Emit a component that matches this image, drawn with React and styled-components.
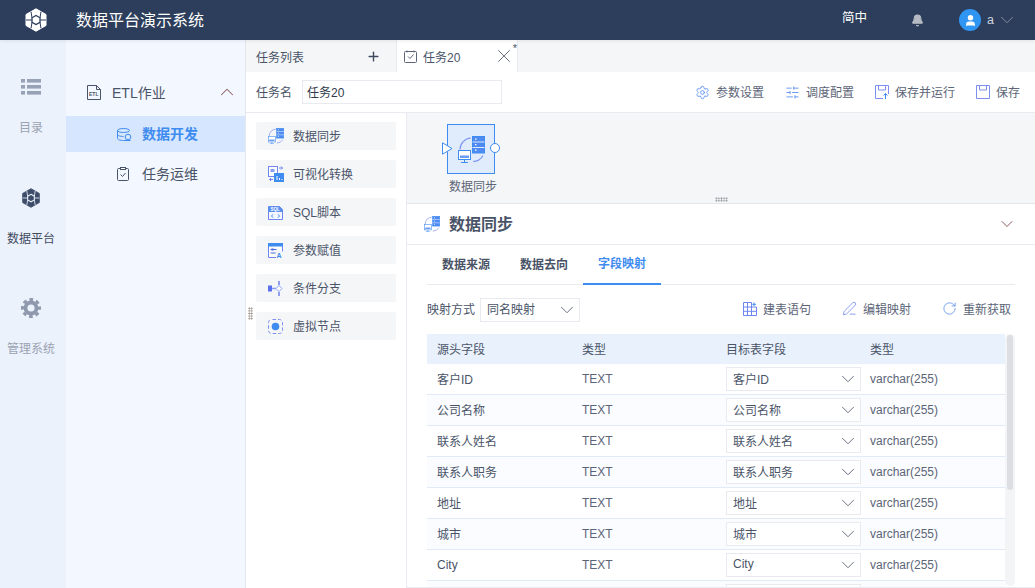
import React from 'react'
import styled, { createGlobalStyle } from 'styled-components'
import { ChevronDown, ChevronUp, Plus, X, Settings, SlidersHorizontal, Bell, User, RotateCw, PenLine } from 'lucide-react'

const GlobalStyle = createGlobalStyle`
  html, body { margin: 0; padding: 0; height: 100%; overflow: hidden; background: #fff; }
  body { font-family: "Liberation Sans", "Noto Sans CJK SC", sans-serif; font-size: 12px; color: #4a5468; }
  * { box-sizing: border-box; }
`

const Page = styled.div`
  width: 1035px;
  height: 588px;
  display: flex;
  flex-direction: column;
  overflow: hidden;
`

const Header = styled.header`
  height: 40px;
  flex: none;
  background: #2c3e5b;
  color: #fff;
  display: flex;
  align-items: center;
  position: relative;
  z-index: 2;
  box-shadow: 0 1px 4px rgba(0, 0, 0, .08);
`
const LogoCell = styled.div`
  width: 72px;
  display: flex;
  justify-content: center;
`
const Title = styled.div`
  font-size: 16px;
  margin: -2px 0 0 4px;
  flex: 1;
`
const Lang = styled.div`
  font-size: 12.5px;
  margin-right: 44px;
  margin-top: -8px;
`
const Avatar = styled.div`
  width: 22px;
  height: 22px;
  border-radius: 50%;
  background: #2f95f3;
  display: flex;
  align-items: center;
  justify-content: center;
  margin-left: 35px;
`
const UserName = styled.div`
  font-size: 12.5px;
  color: #cfd5de;
  margin: 0 2px 0 6px;
`
const UserBox = styled.div`
  display: flex;
  align-items: center;
  margin-right: 17px;
`

const Body = styled.div`
  flex: 1;
  min-height: 0;
  display: flex;
`

const Rail = styled.nav`
  width: 66px;
  flex: none;
  background: #ecf2fc;
  display: flex;
  flex-direction: column;
  align-items: center;
  padding: 36px 4px 0 0;
  gap: 39.5px;
`
const RailItem = styled.div`
  width: 62px;
  height: 71px;
  display: flex;
  flex-direction: column;
  align-items: center;
  gap: 23px;
  font-size: 12px;
  line-height: 14px;
  color: ${p => (p.$active ? '#3f4a5f' : '#9aa3b2')};
`
const RailIcon = styled.div`
  height: 22px;
  display: flex;
  align-items: center;
  justify-content: center;
`

const SideNav = styled.nav`
  width: 180px;
  flex: none;
  background: #f3f7ff;
  border-right: 1px solid #e4e7ee;
  padding-top: 30px;
`
const GroupRow = styled.div`
  height: 44px;
  margin-bottom: 2px;
  display: flex;
  align-items: center;
  padding: 0 7px 0 21px;
  gap: 11px;
  font-size: 14px;
  color: #4a5468;
`
const GroupLabel = styled.span`
  flex: 1;
  margin-top: -1px;
`
const NavItem = styled.div`
  height: 36px;
  margin-bottom: 4px;
  display: flex;
  align-items: center;
  padding-left: 51px;
  font-size: 14px;
  background: ${p => (p.$active ? '#d5e6fe' : 'transparent')};
  color: ${p => (p.$active ? '#3f8cf0' : '#4a5468')};
  font-weight: ${p => (p.$active ? 700 : 400)};
`
const NavIcon = styled.span`
  width: 25px;
  display: flex;
`
const NavLabel = styled.span`
  margin-top: -2px;
`

const Main = styled.main`
  flex: 1;
  min-width: 0;
  display: flex;
  flex-direction: column;
`
const TabBar = styled.div`
  height: 32px;
  flex: none;
  display: flex;
  background: #f5f6f8;
`
const ListTab = styled.div`
  width: 150px;
  display: flex;
  align-items: center;
  justify-content: space-between;
  padding: 0 15px 0 10px;
  font-size: 12px;
`
const OpenTab = styled.div`
  width: 122px;
  background: #fff;
  border-left: 1px solid #e8eaef;
  border-right: 1px solid #e8eaef;
  display: flex;
  align-items: center;
  padding: 0 2px 0 7px;
  gap: 6px;
  font-size: 12px;
  position: relative;
`
const TabText = styled.span`
  flex: 1;
`
const Dirty = styled.span`
  position: absolute;
  right: 0;
  top: 3px;
  font-size: 11px;
  line-height: 11px;
`

const NameRow = styled.div`
  height: 40px;
  flex: none;
  display: flex;
  align-items: center;
  padding: 0 15px 0 10px;
  background: #fff;
`
const NameLabel = styled.span`
  font-size: 12px;
  margin: -2px 10px 0 0;
`
const NameInput = styled.div`
  width: 200px;
  height: 24px;
  border: 1px solid #e8eaef;
  display: flex;
  align-items: center;
  padding: 0 0 2px 4px;
  font-size: 12px;
  color: #2f3a4d;
`
const Actions = styled.div`
  margin-left: auto;
  display: flex;
  align-items: center;
  gap: 21px;
`
const Action = styled.div`
  display: flex;
  align-items: center;
  gap: 6px;
  font-size: 12px;
  color: #5c6577;
`
const ActionText = styled.span`
  margin-top: -1px;
`

const Work = styled.div`
  flex: 1;
  min-height: 0;
  display: flex;
  border-top: 1px solid #e9ebf0;
`
const Palette = styled.aside`
  width: 161px;
  flex: none;
  padding: 9px 10px 0 10px;
  display: flex;
  flex-direction: column;
  gap: 10px;
  border-right: 1px solid #e9ebf0;
  position: relative;
`
const PaletteItem = styled.div`
  height: 28px;
  width: 140px;
  background: #f5f6f8;
  border-radius: 2px;
  display: flex;
  align-items: center;
  padding-left: 12px;
  font-size: 12px;
  color: #4a5468;
`
const PaletteIcon = styled.span`
  width: 25px;
  display: flex;
`
const PaletteLabel = styled.span`
  margin-top: -2px;
`
const DragDots = styled.div`
  position: absolute;
  left: 2px;
  top: 194px;
  width: 5px;
  height: 13px;
  background-image: radial-gradient(#8c7f7a 45%, transparent 50%);
  background-size: 2.5px 2.6px;
`

const Right = styled.div`
  flex: 1;
  min-width: 0;
  display: flex;
  flex-direction: column;
`
const Canvas = styled.div`
  height: 91px;
  flex: none;
  background: #f5f6f8;
  border-bottom: 1px solid #e4e6eb;
  padding: 11px 0 0 40px;
  position: relative;
`
const Node = styled.div`
  width: 48px;
  height: 50px;
  background: #e0ebfc;
  border: 1px solid #3f8cf0;
  display: flex;
  align-items: center;
  justify-content: center;
  position: relative;
`
const PortIn = styled.svg`
  position: absolute;
  left: -6px;
  top: 17px;
`
const PortOut = styled.span`
  position: absolute;
  right: -6px;
  top: 18px;
  width: 10px;
  height: 10px;
  border-radius: 50%;
  border: 1px solid #3f8cf0;
  background: #fff;
`
const NodeLabel = styled.div`
  width: 60px;
  margin: 6px 0 0 -4px;
  font-size: 12px;
  line-height: 14px;
  text-align: center;
  color: #5c6577;
`
const SplitDots = styled.div`
  position: absolute;
  left: 308px;
  bottom: 1px;
  width: 13px;
  height: 5px;
  background-image: radial-gradient(#8c8f96 45%, transparent 50%);
  background-size: 2.6px 2.5px;
`

const Detail = styled.section`
  flex: 1;
  min-height: 0;
  display: flex;
  flex-direction: column;
  background: #fff;
  border-bottom: 1px solid #e9ebf0;
  overflow: hidden;
`
const DetailHead = styled.div`
  height: 41px;
  flex: none;
  border-bottom: 1px solid #e9ebf0;
  display: flex;
  align-items: center;
  padding: 0 18px 0 17px;
  gap: 9px;
`
const DetailTitle = styled.h2`
  flex: 1;
  margin: -2px 0 0;
  font-size: 16px;
  font-weight: 700;
  color: #4a5468;
`
const Tabs = styled.div`
  margin: 0 20px;
  height: 40px;
  flex: none;
  border-bottom: 1px solid #e9ebf0;
  display: flex;
`
const Tab = styled.div`
  width: 78px;
  height: 40px;
  display: flex;
  align-items: center;
  justify-content: center;
  padding-bottom: 4px;
  font-size: 12px;
  font-weight: 700;
  color: ${p => (p.$active ? '#3f8cf0' : '#4a5468')};
  border-bottom: ${p => (p.$active ? '2px solid #3f8cf0' : 'none')};
`
const MapRow = styled.div`
  height: 49px;
  flex: none;
  margin: 0 24px 0 20px;
  display: flex;
  align-items: center;
`
const MapLabel = styled.span`
  font-size: 12px;
  margin: -2px 5px 0 0;
`
const Select = styled.div`
  width: ${p => p.$w}px;
  height: 24px;
  border: 1px solid #e8eaef;
  background: #fff;
  display: flex;
  align-items: center;
  justify-content: space-between;
  padding: 0 1px 0 6px;
  font-size: 12px;
  color: #4a5468;
`
const SelectText = styled.span`
  margin-top: -2px;
`
const MapActions = styled.div`
  margin: -2px 0 0 auto;
  display: flex;
  gap: 31px;
`

const TableWrap = styled.div`
  position: relative;
  margin-left: 20px;
  width: 588px;
`
const Scrollbar = styled.div`
  position: absolute;
  right: 0;
  top: 0;
  width: 10px;
  height: 252px;
  background: #f3f4f6;
  border-radius: 5px;
  &::before {
    content: '';
    display: block;
    width: 6px;
    height: 155px;
    margin: 1px 2px;
    background: #dcdee3;
    border-radius: 3px;
  }
`
const Row = styled.div`
  width: 578px;
  display: grid;
  grid-template-columns: 145px 144px 144px 1fr;
  align-items: center;
  height: ${p => (p.$head ? 30 : 31)}px;
  padding-left: 10px;
  font-size: 12px;
  background: ${p => (p.$head ? '#e9f1fc' : p.$odd ? '#fbfcff' : '#fff')};
  border-bottom: ${p => (p.$head ? 'none' : '1px solid #e1ebf8')};
  color: #4a5468;
`
const SourceCell = styled.span`
  margin-top: -1px;
`
const TypeCell = styled.span`
  color: #5c6577;
`

const Cube = ({ size = 24, color = '#fff', hole = '#2c3e5b' }) => (
  <svg width={size} height={size} viewBox="0 0 24 24">
    <path d="M12 .8l10 5.700v11L12 23.200 2 17.500v-11z" fill={color} stroke={color} strokeWidth="1" strokeLinejoin="round" />
    <path d="M7 3.700l1 6.100M17 3.700l-1 6.100M22 12h-6M17 20.300l-1-6M7 20.300l1-6M2 12h6" stroke={hole} strokeWidth="1" />
    <path d="M12 7.500l4 2.300v4.500l-4 2.300-4-2.300V9.800z" fill={color} stroke={hole} strokeWidth="1.300" />
  </svg>
)
const ListIcon = () => (
  <svg width="20" height="16" viewBox="0 0 20 16" fill="#98a2b6">
    <rect x="0" y="0" width="4" height="3.600" /><rect x="6" y="0" width="14" height="3.600" />
    <rect x="0" y="6" width="4" height="3.600" /><rect x="6" y="6" width="14" height="3.600" />
    <rect x="0" y="12" width="4" height="3.600" /><rect x="6" y="12" width="14" height="3.600" />
  </svg>
)
const GearSolid = () => (
  <svg width="20" height="20" viewBox="0 0 20 20" fill="none" stroke="#8e99ad">
    <circle cx="10" cy="10" r="5.500" strokeWidth="3.800" />
    <circle cx="10" cy="10" r="8.500" strokeWidth="3" strokeDasharray="3.700 2.980" strokeDashoffset="1.850" />
  </svg>
)
const EtlIcon = () => (
  <svg width="14" height="15" viewBox="0 0 14 15" fill="none" stroke="#4a5468">
    <path d="M.5.500h9l4 4v10H.500z" />
    <path d="M9.500.500v4h4" />
    <text x="2" y="11" fontSize="5" fontWeight="700" fill="#4a5468" stroke="none">ETL</text>
  </svg>
)
const DbIcon = () => (
  <svg width="15" height="13" viewBox="0 0 15 13" fill="none" stroke="#3f8cf0">
    <ellipse cx="6.500" cy="2.500" rx="6" ry="2" />
    <path d="M.5 2.500v8c0 1.100 2.700 2 6 2h7M.5 6.500c0 1.100 2.700 2 6 2" />
    <circle cx="11" cy="9" r="2.800" />
  </svg>
)
const ClipIcon = () => (
  <svg width="12" height="14" viewBox="0 0 12 14" fill="none" stroke="#4a5468">
    <rect x=".5" y="1.500" width="11" height="12" rx="1" />
    <rect x="3.500" y=".5" width="5" height="2" fill="#fff" />
    <path d="M3.500 7.500l2 2 3-3.500" />
  </svg>
)
const CheckTab = () => (
  <svg width="13" height="13" viewBox="0 0 13 13" fill="none" stroke="#5c6577">
    <rect x=".5" y="1.500" width="12" height="11" rx="1" />
    <path d="M3 .5v2M10 .5v2M4 6.500l2 2 3.500-4" />
  </svg>
)
const SaveIcon = ({ run }) => (
  <svg width="14" height="14" viewBox="0 0 14 14" fill="none">
    <path d="M.5.500h13v13H.5z" stroke="#7f8ff0" />
    <path d="M3.500.500v4.500h7V.500" stroke="#7f8ff0" />
    {run && <path d="M8 9h6v5H8z" fill="#fff" stroke="none" />}
    {run && <path d="M10.500 14V8.500M8.500 10.500l2-2 2 2" stroke="#3f8cf0" />}
  </svg>
)
const SyncIcon = ({ size = 27 }) => (
  <svg width={size} height={size} viewBox="0 0 27 27">
    <path d="M2 13.500A11.500 11.500 0 0 1 13 2M25 19.500a11.500 11.500 0 0 1-10 6" fill="none" stroke="#7f95f2" strokeWidth="1.200" />
    <rect x="14.500" y=".5" width="12" height="16.500" fill="#4d8bf3" stroke="#3f8cf0" />
    <path d="M14.500 6h12M14.500 11.500h12" stroke="#dce8fe" />
    <path d="M17 3.200h1.500M17 8.700h1.500M17 14.200h1.500" stroke="#fff" strokeWidth="1.300" />
    <rect x=".5" y="14.500" width="12" height="9" fill="#fff" stroke="#3f8cf0" />
    <rect x="2" y="19.500" width="9" height="2.500" fill="#6d9cf6" />
    <path d="M6.500 23.500v3M3 26.500h7" stroke="#3f8cf0" />
  </svg>
)
const VisualIcon = () => (
  <svg width="16" height="16" viewBox="0 0 16 16">
    <rect x=".5" y=".5" width="9" height="10" fill="#fff" stroke="#6f86ee" />
    <path d="M2.500 3h4v3h-4z" fill="#8aa0f5" />
    <rect x="6" y="7" width="10" height="9" fill="#3f8cf0" />
    <path d="M9 14v-4M11.500 14v-2M14 14v-1" stroke="#fff" />
    <path d="M11 2h3.500M13 .5l1.500 1.500L13 3.500M5 13.500H1.500M3 12l-1.500 1.500L3 15" fill="none" stroke="#6f86ee" />
  </svg>
)
const SqlIcon = () => (
  <svg width="15" height="15" viewBox="0 0 15 15">
    <path d="M.5 1.500h11l3 3v10H.5z" fill="#f4f7ff" stroke="#6f86ee" />
    <path d="M.5 1.500h11l3 3v2.500H.5z" fill="#5a8ff2" />
    <text x="2.500" y="6" fontSize="4.500" fontWeight="700" fill="#fff">SQL</text>
    <path d="M5 9.300L3.500 11 5 12.700M10 9.300l1.500 1.700-1.500 1.700" fill="none" stroke="#3f8cf0" />
  </svg>
)
const ParamIcon = () => (
  <svg width="15" height="15" viewBox="0 0 15 15">
    <path d="M.5.500h14v8M8 14.500H.5V.5" fill="#fff" stroke="#6f86ee" />
    <rect x="0" y="0" width="15" height="3.500" fill="#3f8cf0" />
    <path d="M2.500 6.500h6M2.500 10h5" stroke="#4f6be0" />
    <rect x="3.500" y="5.500" width="2" height="2" fill="#4f6be0" />
    <text x="8.500" y="14.800" fontSize="7" fontWeight="700" fill="#3f8cf0">A</text>
  </svg>
)
const BranchIcon = () => (
  <svg width="15" height="15" viewBox="0 0 15 15">
    <rect x="0" y="4.500" width="4" height="6" fill="#5a70ec" />
    <path d="M4 7.500h4" stroke="#8aa0f5" strokeWidth="1.500" />
    <path d="M11 4.500l3 3-3 3-3-3z" fill="#fff" stroke="#8aa0f5" />
    <path d="M11 0v4M11 11v4" stroke="#5a70ec" strokeWidth="1.300" />
  </svg>
)
const VirtualIcon = () => (
  <svg width="15" height="15" viewBox="0 0 15 15">
    <rect x=".5" y=".5" width="14" height="14" rx="3" fill="none" stroke="#7f8ff0" strokeDasharray="3.500 2" strokeDashoffset="-1" />
    <circle cx="7.500" cy="7.500" r="3.800" fill="#3f8cf0" />
  </svg>
)
const TableIcon = () => (
  <svg width="14" height="14" viewBox="0 0 14 14" fill="none" stroke="#6f86ee">
    <path d="M.5.500h8v4.500h5v8.500H.5zM.5 5h8M.5 9.300h13M4.500.500v13M8.500 5v8.500" />
    <path d="M11 .5v3.500M9.300 2.300h3.700" stroke="#3f8cf0" />
  </svg>
)

const rows = [
  ['客户ID', '客户ID'],
  ['公司名称', '公司名称'],
  ['联系人姓名', '联系人姓名'],
  ['联系人职务', '联系人职务'],
  ['地址', '地址'],
  ['城市', '城市'],
  ['City', 'City'],
  ['', ''],
]

const palette = [
  ['数据同步', <SyncIcon key="a" size={16} />],
  ['可视化转换', <VisualIcon key="b" />],
  ['SQL脚本', <SqlIcon key="c" />],
  ['参数赋值', <ParamIcon key="d" />],
  ['条件分支', <BranchIcon key="e" />],
  ['虚拟节点', <VirtualIcon key="f" />],
]

const App = () => {
  return (
    <Page>
      <GlobalStyle />
      <Header>
        <LogoCell><Cube /></LogoCell>
        <Title>数据平台演示系统</Title>
        <Lang>简中</Lang>
        <Bell size={13} color="#b5bac3" fill="#b5bac3" />
        <UserBox>
          <Avatar><User size={13} color="#fff" fill="#fff" /></Avatar>
          <UserName>a</UserName>
          <ChevronDown size={22} color="#8b95a5" strokeWidth={1} />
        </UserBox>
      </Header>
      <Body>
        <Rail>
          <RailItem><RailIcon><ListIcon /></RailIcon><span>目录</span></RailItem>
          <RailItem $active><RailIcon><Cube size={20} color="#3d4c68" hole="#ecf2fc" /></RailIcon><span>数据平台</span></RailItem>
          <RailItem><RailIcon><GearSolid /></RailIcon><span>管理系统</span></RailItem>
        </Rail>
        <SideNav>
          <GroupRow>
            <EtlIcon />
            <GroupLabel>ETL作业</GroupLabel>
            <ChevronUp size={22} color="#8a5a5a" strokeWidth={1.1} />
          </GroupRow>
          <NavItem $active><NavIcon><DbIcon /></NavIcon><NavLabel>数据开发</NavLabel></NavItem>
          <NavItem><NavIcon><ClipIcon /></NavIcon><NavLabel>任务运维</NavLabel></NavItem>
        </SideNav>
        <Main>
          <TabBar>
            <ListTab>任务列表<Plus size={15} color="#3f4a5f" strokeWidth={2.2} /></ListTab>
            <OpenTab>
              <CheckTab />
              <TabText>任务20</TabText>
              <X size={22} color="#5c6577" strokeWidth={1} />
              <Dirty>*</Dirty>
            </OpenTab>
          </TabBar>
          <NameRow>
            <NameLabel>任务名</NameLabel>
            <NameInput>任务20</NameInput>
            <Actions>
              <Action><Settings size={15} color="#5a8ff2" strokeWidth={1.4} /><ActionText>参数设置</ActionText></Action>
              <Action><SlidersHorizontal size={15} color="#5a8ff2" strokeWidth={1.4} /><ActionText>调度配置</ActionText></Action>
              <Action><SaveIcon run /><ActionText>保存并运行</ActionText></Action>
              <Action><SaveIcon /><ActionText>保存</ActionText></Action>
            </Actions>
          </NameRow>
          <Work>
            <Palette>
              {palette.map(([label, icon]) => (
                <PaletteItem key={label}><PaletteIcon>{icon}</PaletteIcon><PaletteLabel>{label}</PaletteLabel></PaletteItem>
              ))}
              <DragDots />
            </Palette>
            <Right>
              <Canvas>
                <Node>
                  <PortIn width="11" height="13" viewBox="0 0 11 13">
                    <path d="M.5.800v11.400L10 6.500z" fill="#fff" stroke="#3f8cf0" />
                  </PortIn>
                  <SyncIcon />
                  <PortOut />
                </Node>
                <NodeLabel>数据同步</NodeLabel>
                <SplitDots />
              </Canvas>
              <Detail>
                <DetailHead>
                  <SyncIcon size={16} />
                  <DetailTitle>数据同步</DetailTitle>
                  <ChevronDown size={20} color="#8a5a5a" strokeWidth={1.2} />
                </DetailHead>
                <Tabs>
                  <Tab>数据来源</Tab>
                  <Tab>数据去向</Tab>
                  <Tab $active>字段映射</Tab>
                </Tabs>
                <MapRow>
                  <MapLabel>映射方式</MapLabel>
                  <Select $w={100}><SelectText>同名映射</SelectText><ChevronDown size={22} color="#5c6577" strokeWidth={1} /></Select>
                  <MapActions>
                    <Action><TableIcon /><ActionText>建表语句</ActionText></Action>
                    <Action><PenLine size={15} color="#6f86ee" strokeWidth={1.3} /><ActionText>编辑映射</ActionText></Action>
                    <Action><RotateCw size={15} color="#5a8ff2" strokeWidth={1.3} /><ActionText>重新获取</ActionText></Action>
                  </MapActions>
                </MapRow>
                <TableWrap>
                  <Row $head>
                    <SourceCell>源头字段</SourceCell><SourceCell>类型</SourceCell><SourceCell>目标表字段</SourceCell><SourceCell>类型</SourceCell>
                  </Row>
                  {rows.map(([src, target], i) => (
                    <Row key={i} $odd={i % 2 === 1}>
                      <SourceCell>{src}</SourceCell>
                      <TypeCell>{src && 'TEXT'}</TypeCell>
                      <div>
                        <Select $w={135}><SelectText>{target}</SelectText><ChevronDown size={22} color="#5c6577" strokeWidth={1} /></Select>
                      </div>
                      <TypeCell>{src && 'varchar(255)'}</TypeCell>
                    </Row>
                  ))}
                  <Scrollbar />
                </TableWrap>
              </Detail>
            </Right>
          </Work>
        </Main>
      </Body>
    </Page>
  )
}

export default App
